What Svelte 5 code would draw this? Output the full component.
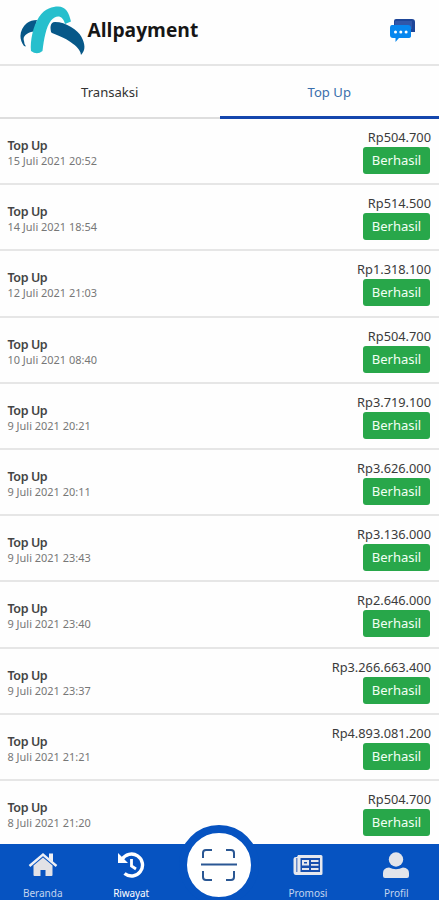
<script>
  const rows = [
    ['15 Juli 2021 20:52', 'Rp504.700'],
    ['14 Juli 2021 18:54', 'Rp514.500'],
    ['12 Juli 2021 21:03', 'Rp1.318.100'],
    ['10 Juli 2021 08:40', 'Rp504.700'],
    ['9 Juli 2021 20:21', 'Rp3.719.100'],
    ['9 Juli 2021 20:11', 'Rp3.626.000'],
    ['9 Juli 2021 23:43', 'Rp3.136.000'],
    ['9 Juli 2021 23:40', 'Rp2.646.000'],
    ['9 Juli 2021 23:37', 'Rp3.266.663.400'],
    ['8 Juli 2021 21:21', 'Rp4.893.081.200'],
    ['8 Juli 2021 21:20', 'Rp504.700']
  ];
</script>

<div class="app">
  <header>
    <div class="brand">
      <svg width="66" height="50" viewBox="0 0 66 50">
        <path d="M4 40C-2 32 0 23 7 17Q11 14 17 14L14 25.500C8 26 2 30 4 35Q4 38 6 40.500Z" fill="#075888" />
        <path d="M11 45C10 35 13 20 19 11C25 2 33 .5 38 .5C46 .5 49 7 51 15.500L45 18C43 10 37 8 31 14.500C26 21 24 33 22.500 45Q17 49.500 11 45Z" fill="#27bfcd" />
        <path d="M35 16C46 16 58 24 61.500 31C65 38 66 44 61 49C61 42 49 33 32 27Q30.500 26.500 30.500 21Q31 16 35 16Z" fill="#075888" />
      </svg>
      <span class="name">Allpayment</span>
    </div>
    <svg class="chat" width="26" height="24" viewBox="0 0 26 24">
      <path d="M7 0H23Q26 0 26 3V13H22V7H5V2Q5 0 7 0Z" fill="#1e4698" />
      <path d="M6 2H23V10H6Z" fill="#3157a9" />
      <path d="M3 6H19Q22 6 22 9V17Q22 19 19 19H10L6.500 23V19H4Q1 19 1 16V9Q1 6 3 6Z" fill="#0787ef" />
      <g fill="#fff"><circle cx="6.500" cy="13" r="1.500" /><circle cx="11.800" cy="13" r="1.500" /><circle cx="17.100" cy="13" r="1.500" /></g>
    </svg>
  </header>
  <div class="tabs">
    <div class="tab">Transaksi</div>
    <div class="tab active">Top Up</div>
  </div>
  <main>
    {#each rows as [date, amount]}
      <div class="row">
        <div class="info">
          <div class="title">Top Up</div>
          <div class="date">{date}</div>
        </div>
        <div class="right">
          <div class="amount">{amount}</div>
          <div class="badge">Berhasil</div>
        </div>
      </div>
    {/each}
  </main>
  <nav>
    <div class="item">
      <svg width="30" height="26" viewBox="0 0 30 26" fill="#eef0f5">
        <path d="M15 5.500L5.500 13.500V23Q5.500 24 6.500 24H12.500V18H17.500V24H23.500Q24.500 24 24.500 23V13.500Z" fill="#e2e2e6" />
        <path d="M1.500 14L15 2.500L28.500 14" fill="none" stroke="#eef0f5" stroke-width="2.400" />
        <path d="M21 1.500H25V10L21 6.500Z" />
      </svg>
      <span>Beranda</span>
    </div>
    <div class="item current">
      <svg width="28" height="26" viewBox="0 0 28 26" fill="none" stroke="#fff">
        <path d="M5 7.500A11 11 0 1 1 7.500 21.500" stroke-width="3.400" />
        <path d="M1 1V11H11Z" fill="#fff" stroke="none" />
        <path d="M14.500 7V14L19 17" stroke-width="2.800" />
      </svg>
      <span>Riwayat</span>
    </div>
    <div class="middle">
      <div class="scan">
        <svg width="38" height="34" viewBox="0 0 38 34" fill="none" stroke="#2a5794" stroke-width="2">
          <path d="M3 10V5Q3 2 6 2H12M26 2H31Q34 2 34 5V10M3 23V29Q3 32 6 32H12M26 32H31Q34 32 34 29V23" />
          <path d="M1 16.500H37" />
        </svg>
      </div>
    </div>
    <div class="item">
      <svg width="30" height="26" viewBox="0 0 30 26">
        <path d="M5 3H28Q29.500 3 29.500 4.500V21.500Q29.500 23 28 23H3Q.5 23 .5 20V7Q.5 5 3 5H4Z" fill="#e6e8ee" />
        <path d="M3.800 6V20" stroke="#4a72c0" stroke-width="1.200" />
        <rect x="7.500" y="6" width="19.500" height="14" fill="#174fae" />
        <path d="M9 8H16V13.500H9ZM18 8H25.500V10H18ZM18 12H25.500V13.800H18ZM9 16H16V18H9ZM18 16H25.500V18H18Z" fill="#e6e8ee" />
        <path d="M11 10H14V11.500H11Z" fill="#174fae" />
      </svg>
      <span>Promosi</span>
    </div>
    <div class="item">
      <svg width="26" height="26" viewBox="0 0 26 26" fill="#e2e4ea">
        <circle cx="13" cy="7.500" r="7.200" />
        <path d="M0 24V21Q0 16 6 15.500Q13 19 20 15.500Q26 16 26 21V24Q26 26 24 26H2Q0 26 0 24Z" />
      </svg>
      <span>Profil</span>
    </div>
  </nav>
</div>

<style>
  :global(body) { margin: 0; overflow: hidden; }
  .app {
    position: relative;
    display: flex;
    flex-direction: column;
    height: 900px;
    overflow: hidden;
    background: #fefefe;
    font-family: "Noto Sans", "Open Sans", sans-serif;
    color: #333;
  }
  header {
    flex: none;
    box-sizing: border-box;
    height: 66px;
    padding: 6px 24px 0 20px;
    display: flex;
    justify-content: space-between;
    border-bottom: 2px solid #e5e5e5;
  }
  .brand { display: flex; }
  .name {
    margin: 11px 0 0 1.500px;
    font: 700 19.200px/26px "Open Sans", "Noto Sans", sans-serif;
    color: #161616;
  }
  .chat { margin-top: 13px; }
  .tabs { flex: none; display: flex; height: 53px; }
  .tab {
    box-sizing: border-box;
    width: 50%;
    height: 53px;
    border-bottom: 2px solid #dedede;
    text-align: center;
    font-size: 13.100px;
    line-height: 53px;
    color: #333;
  }
  .active { border-bottom: 3px solid #1446ad; color: #3a6fac; }
  main { flex: none; }
  .row {
    box-sizing: border-box;
    height: 66.200px;
    padding: 9px 8px 0 7.500px;
    display: flex;
    justify-content: space-between;
    border-bottom: 2px solid #e6e6e6;
  }
  .title { margin-top: 9px; font-size: 12.500px; line-height: 17px; font-weight: 600; letter-spacing: -.4px; color: #444; }
  .date { font-size: 10.950px; line-height: 14px; color: #777; }
  .right { display: flex; flex-direction: column; align-items: flex-end; }
  .amount { font-size: 12.800px; line-height: 18px; color: #3b3b3b; }
  .badge {
    width: 67px;
    height: 27px;
    margin: 1px 1px 0 0;
    border-radius: 3px;
    background: #28a74a;
    color: #f2fff4;
    font-size: 13px;
    line-height: 27px;
    text-align: center;
  }
  nav {
    position: absolute;
    inset: 844px -1.500px 0;
    display: flex;
    background: #0653c1;
  }
  .item {
    flex: 1;
    display: flex;
    flex-direction: column;
    align-items: center;
    padding-top: 8px;
    color: #c3d4ef;
    font-size: 10px;
    line-height: 14px;
    white-space: nowrap;
  }
  .item svg { flex: none; }
  .item span { margin-top: 8px; }
  .current { color: #fff; letter-spacing: -.1px; }
  .middle { flex: 1; display: flex; justify-content: center; }
  .scan {
    flex: none;
    box-sizing: border-box;
    width: 80px;
    height: 80px;
    margin: -19px 1px 0 0;
    border: 8px solid #0653c1;
    border-radius: 50%;
    background: #fff;
    display: flex;
    align-items: center;
    justify-content: center;
  }
</style>
